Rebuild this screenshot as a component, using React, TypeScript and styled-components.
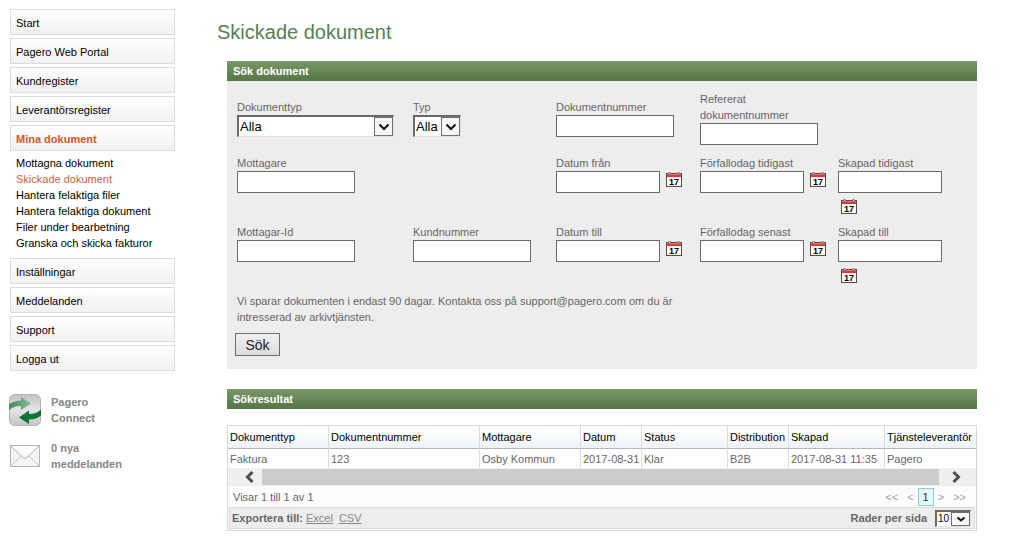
import React, { useId } from "react";
import styled, { createGlobalStyle, css } from "styled-components";

const GlobalStyle = createGlobalStyle`
  *, *::before, *::after { box-sizing: border-box; }
  body {
    margin: 0;
    background: #fff;
    color: #666;
    font-family: "Liberation Sans", Arial, sans-serif;
    font-size: 11px;
    line-height: 16px;
  }
  button, input, select { font-family: inherit; margin: 0; border-radius: 0; }
`;

const Page = styled.div`
  display: flex;
  align-items: flex-start;
  gap: 42px;
  padding: 9px 40px 18px 10px;
`;

const Sidebar = styled.aside`
  flex: 0 0 165px;
`;

const NavList = styled.ul`
  list-style: none;
  margin: 0;
  padding: 0;
  display: flex;
  flex-direction: column;
  gap: 3px;
`;

const NavLink = styled.a<{ $active?: boolean }>`
  display: block;
  height: 26px;
  padding: 5px;
  border: 1px solid #dcdcdc;
  background: linear-gradient(#fff, #f1f1f1);
  color: ${(p) => (p.$active ? "#d0592b" : "#000")};
  font-weight: ${(p) => (p.$active ? "bold" : "normal")};
  line-height: 16px;
  text-decoration: none;
`;

const SubList = styled.ul`
  list-style: none;
  margin: 0;
  padding: 4px 0 4px 6px;
`;

const SubLink = styled.a<{ $active?: boolean }>`
  display: block;
  color: ${(p) => (p.$active ? "#cc6248" : "#000")};
  text-decoration: none;
`;

const Shortcuts = styled.div`
  display: flex;
  flex-direction: column;
  gap: 14px;
  margin-top: 23px;
`;

const Shortcut = styled.a`
  display: grid;
  grid-template-columns: 32px 80px;
  align-items: center;
  gap: 10px;
  margin-left: -1px;
  color: #868686;
  font-weight: bold;
  text-decoration: none;
`;

const Main = styled.main`
  flex: 1;
  min-width: 0;
`;

const Title = styled.h1`
  margin: 11px 0 17px;
  color: #578054;
  font-size: 20px;
  line-height: 24px;
  font-weight: normal;
`;

const Panel = styled.section`
  margin: 0 0 20px 10px;
`;

const PanelTitle = styled.h2`
  margin: 0;
  padding: 2px 6px;
  background: linear-gradient(#7a9969, #567545);
  color: #fff;
  font-size: 11px;
  line-height: 16px;
  font-weight: bold;
`;

const SearchForm = styled.form`
  padding: 10px 15px 13px 10px;
  background: #ededed;
`;

const Fields = styled.div`
  display: grid;
  grid-template-columns: 176fr 143fr 144fr 138fr 124fr;
  row-gap: 10px;
`;

const Field = styled.div<{ $col: number; $row: number }>`
  grid-column: ${(p) => p.$col};
  grid-row: ${(p) => p.$row};
  align-self: ${(p) => (p.$row === 1 ? "center" : "start")};
  min-width: 0;
`;

const Label = styled.label`
  display: block;
  max-width: 118px;
`;

const Control = styled.div`
  display: flex;
  flex-wrap: wrap;
  align-items: flex-start;
  gap: 5px 3px;
`;

const TextInput = styled.input<{ $short?: boolean }>`
  width: ${(p) => (p.$short ? 104 : 118)}px;
  height: 22px;
  padding: 1px 3px;
  border: 1px solid #6a6a6a;
  background: #fff;
  font-size: 13px;
`;

const IconButton = styled.button`
  display: block;
  width: 16px;
  height: 15px;
  margin: 1px 0 0 3px;
  padding: 0;
  border: 0;
  background: none;
`;

const small = css`
  height: 17px;
  font-size: 10px;
`;

const SelectBox = styled.div<{ $width: number; $small?: boolean }>`
  position: relative;
  width: ${(p) => p.$width}px;
  height: ${(p) => (p.$small ? 17 : 22)}px;
`;

const Select = styled.select<{ $small?: boolean }>`
  appearance: none;
  display: block;
  width: 100%;
  height: 22px;
  padding: 0 1px;
  border: 1px solid #e3e3e3;
  border-top: 2px solid #696969;
  border-left: 2px solid #696969;
  background: #fff;
  color: #000;
  font-size: 13px;
  ${(p) => p.$small && small}
`;

const SelectArrow = styled.span`
  position: absolute;
  top: 2px;
  right: 1px;
  bottom: 1px;
  width: 19px;
  display: flex;
  align-items: center;
  justify-content: center;
  border: 1px solid #707070;
  background: #f6f6f6;
  pointer-events: none;
`;

const Note = styled.p`
  max-width: 460px;
  margin: 10px 0 8px;
`;

const SearchButton = styled.button`
  display: block;
  width: 45px;
  height: 23px;
  margin-left: -2px;
  padding: 0;
  border: 1px solid #6d6d6d;
  background: linear-gradient(#f1f1f1, #dcdcdc);
  color: #222;
  font-size: 14px;
`;

const Result = styled.div`
  margin-top: 16px;
  border: 1px solid #d8d8d8;
  background: #fcfcfc;
`;

const Table = styled.table`
  width: 100%;
  table-layout: fixed;
  border-collapse: separate;
  border-spacing: 0;
  white-space: nowrap;
`;

const HeadCell = styled.th`
  height: 23px;
  padding: 0 2px;
  border-right: 1px solid #dcdcdc;
  border-bottom: 1px solid #b4b7b9;
  background: linear-gradient(#fff 30%, #eef2f5);
  color: #000;
  font-weight: normal;
  text-align: left;
  &:last-child { border-right: 0; }
`;

const Cell = styled.td`
  height: 19px;
  padding: 0 2px;
  border-right: 1px solid #dcdcdc;
  background: #fff;
  &:last-child { border-right: 0; }
`;

const ScrollBar = styled.div`
  display: flex;
  align-items: stretch;
  height: 18px;
  padding: 1px 0;
  background: #efefef;
`;

const ScrollButton = styled.button<{ $side: "left" | "right" }>`
  display: flex;
  align-items: center;
  justify-content: flex-end;
  width: ${(p) => (p.$side === "left" ? 34 : 37)}px;
  padding: 0 ${(p) => (p.$side === "left" ? 8 : 14)}px 0 0;
  border: 0;
  background: none;
`;

const ScrollThumb = styled.div`
  flex: 1;
  background: #cdcdcd;
`;

const PagerRow = styled.div`
  display: flex;
  align-items: center;
  justify-content: space-between;
  height: 21px;
  padding: 0 10px 0 5px;
`;

const Pager = styled.nav`
  display: flex;
  align-items: center;
  gap: 4px;
`;

const PageButton = styled.button<{ $current?: boolean }>`
  height: 18px;
  padding: 0 ${(p) => (p.$current ? 4 : 0)}px;
  border: ${(p) => (p.$current ? "1px solid #8ccbe0" : "0")};
  background: ${(p) => (p.$current ? "#e2f7fe" : "none")};
  color: ${(p) => (p.$current ? "#333" : "#a0a0a0")};
  font-size: 11px;
  line-height: 16px;
  &:first-child { margin-right: 5px; }
  &:last-child { margin-left: 5px; }
`;

const Footer = styled.div`
  display: flex;
  align-items: center;
  justify-content: space-between;
  height: 22px;
  margin: 0 1px 1px;
  padding: 0 3px 0 2px;
  border: 1px solid #dadada;
  background: #ededed;
  font-weight: bold;
`;

const Exports = styled.div`
  display: flex;
  gap: 6px;
`;

const ExportLink = styled.a`
  color: #888;
  font-weight: normal;
`;

const PageSize = styled.div`
  display: flex;
  align-items: center;
  gap: 8px;
`;

const CalendarIcon = () => (
  <svg width="16" height="15" viewBox="0 0 16 15" aria-hidden="true">
    <rect x="0.5" y="1.5" width="15" height="13" fill="#fffdf6" stroke="#5c4a42" />
    <rect x="1" y="2" width="14" height="3" fill="#e5373b" />
    <path d="M1 2.5h14" stroke="#f4777a" />
    <rect x="2.5" y="0.5" width="2" height="2" rx="1" fill="#eee" stroke="#6b4b48" />
    <rect x="11.5" y="0.5" width="2" height="2" rx="1" fill="#eee" stroke="#6b4b48" />
    <text x="8" y="13" textAnchor="middle" fontFamily="Liberation Sans, sans-serif" fontWeight="bold" fontSize="9" fill="#000">17</text>
  </svg>
);

const ConnectIcon = () => (
  <svg width="32" height="32" viewBox="0 0 32 32" aria-hidden="true">
    <defs>
      <linearGradient id="tile" x1="0" y1="0" x2="0" y2="1">
        <stop offset="0" stopColor="#c2c2c2" />
        <stop offset="0.5" stopColor="#e4e4e4" />
        <stop offset="1" stopColor="#c4c4c4" />
      </linearGradient>
      <linearGradient id="pale" x1="0" y1="0" x2="1" y2="0">
        <stop offset="0" stopColor="#3f8a58" />
        <stop offset="1" stopColor="#8fbb9c" />
      </linearGradient>
    </defs>
    <rect x="0.5" y="0.5" width="31" height="31" rx="5" fill="url(#tile)" stroke="#b2b2b2" />
    <path d="M0 10.500C4 7.500 8 6.500 12 6.500V3l10 6.500L12 16v-4C8 11.500 4 12.500 0 16z" fill="url(#pale)" />
    <path d="M32 15.500c-3 3-7 4.500-12 4.500V16.500L10 23.500 20 30v-4.500c5 0 9-1.500 12-4z" fill="#0f7336" />
  </svg>
);

const MailIcon = () => (
  <svg width="32" height="24" viewBox="0 0 32 24" aria-hidden="true">
    <rect x="1.500" y="1.500" width="29" height="21" fill="#f4f4f4" stroke="#b5b5b5" />
    <path d="M2 22l10-10M30 22L20 12" fill="none" stroke="#c4c4c4" />
    <path d="M2 2l12 11.500q2 1.500 4 0L30 2" fill="#fbfbfb" stroke="#b0b0b0" />
  </svg>
);

const Chevron = ({ d }: { d: string }) => (
  <svg width="10" height="14" viewBox="0 0 10 14" aria-hidden="true">
    <path d={d} fill="none" stroke="#505050" strokeWidth="3" />
  </svg>
);

function DropDown({ id, value, width, small: isSmall }: { id: string; value: string; width: number; small?: boolean }) {
  return (
    <SelectBox $width={width} $small={isSmall}>
      <Select id={id} $small={isSmall}>
        <option>{value}</option>
      </Select>
      <SelectArrow>
        <svg width="12" height="8" viewBox="0 0 12 8" aria-hidden="true">
          <path
            d={isSmall ? "M2.500 2.500L6 5.500 9.500 2.500" : "M1.500 1.500L6 6 10.500 1.500"}
            fill="none"
            stroke="#111"
            strokeWidth="2"
          />
        </svg>
      </SelectArrow>
    </SelectBox>
  );
}

type FieldSpec = {
  label: string;
  col: number;
  row: number;
  select?: number;
  date?: boolean;
};

const fields: FieldSpec[] = [
  { label: "Dokumenttyp", col: 1, row: 1, select: 157 },
  { label: "Typ", col: 2, row: 1, select: 48 },
  { label: "Dokumentnummer", col: 3, row: 1 },
  { label: "Refererat dokumentnummer", col: 4, row: 1 },
  { label: "Mottagare", col: 1, row: 2 },
  { label: "Datum från", col: 3, row: 2, date: true },
  { label: "Förfallodag tidigast", col: 4, row: 2, date: true },
  { label: "Skapad tidigast", col: 5, row: 2, date: true },
  { label: "Mottagar-Id", col: 1, row: 3 },
  { label: "Kundnummer", col: 2, row: 3 },
  { label: "Datum till", col: 3, row: 3, date: true },
  { label: "Förfallodag senast", col: 4, row: 3, date: true },
  { label: "Skapad till", col: 5, row: 3, date: true },
];

function SearchField({ label, col, row, select, date }: FieldSpec) {
  const id = useId();
  return (
    <Field $col={col} $row={row}>
      <Label htmlFor={id}>{label}</Label>
      <Control>
        {select ? <DropDown id={id} value="Alla" width={select} /> : <TextInput id={id} type="text" $short={date} />}
        {date && (
          <IconButton type="button" aria-label={`Välj ${label}`}>
            <CalendarIcon />
          </IconButton>
        )}
      </Control>
    </Field>
  );
}

const subPages = [
  "Mottagna dokument",
  "Skickade dokument",
  "Hantera felaktiga filer",
  "Hantera felaktiga dokument",
  "Filer under bearbetning",
  "Granska och skicka fakturor",
];

const pages = [
  "Start",
  "Pagero Web Portal",
  "Kundregister",
  "Leverantörsregister",
  "Mina dokument",
  "Inställningar",
  "Meddelanden",
  "Support",
  "Logga ut",
];

const columns = [
  { name: "Dokumenttyp", share: 101, value: "Faktura" },
  { name: "Dokumentnummer", share: 151, value: "123" },
  { name: "Mottagare", share: 101, value: "Osby Kommun" },
  { name: "Datum", share: 61, value: "2017-08-31" },
  { name: "Status", share: 86, value: "Klar" },
  { name: "Distribution", share: 61, value: "B2B" },
  { name: "Skapad", share: 96, value: "2017-08-31 11:35" },
  { name: "Tjänsteleverantör", share: 91, value: "Pagero" },
];

const totalShare = columns.reduce((sum, c) => sum + c.share, 0);

export default function App() {
  return (
    <>
      <GlobalStyle />
      <Page>
        <Sidebar>
          <NavList>
            {pages.map((page) => (
              <li key={page}>
                <NavLink href="#" $active={page === "Mina dokument"}>{page}</NavLink>
                {page === "Mina dokument" && (
                  <SubList>
                    {subPages.map((sub) => (
                      <li key={sub}>
                        <SubLink href="#" $active={sub === "Skickade dokument"}>{sub}</SubLink>
                      </li>
                    ))}
                  </SubList>
                )}
              </li>
            ))}
          </NavList>
          <Shortcuts>
            <Shortcut href="#"><ConnectIcon />Pagero Connect</Shortcut>
            <Shortcut href="#"><MailIcon />0 nya meddelanden</Shortcut>
          </Shortcuts>
        </Sidebar>

        <Main>
          <Title>Skickade dokument</Title>

          <Panel>
            <PanelTitle>Sök dokument</PanelTitle>
            <SearchForm onSubmit={(e) => e.preventDefault()}>
              <Fields>
                {fields.map((f) => <SearchField key={f.label} {...f} />)}
              </Fields>
              <Note>
                Vi sparar dokumenten i endast 90 dagar. Kontakta oss på support@pagero.com om du är intresserad av
                arkivtjänsten.
              </Note>
              <SearchButton type="submit">Sök</SearchButton>
            </SearchForm>
          </Panel>

          <Panel>
            <PanelTitle>Sökresultat</PanelTitle>
            <Result>
              <Table>
                <colgroup>
                  {columns.map((c) => (
                    <col key={c.name} style={{ width: `${(c.share / totalShare) * 100}%` }} />
                  ))}
                </colgroup>
                <thead>
                  <tr>{columns.map((c) => <HeadCell key={c.name} scope="col">{c.name}</HeadCell>)}</tr>
                </thead>
                <tbody>
                  <tr>{columns.map((c) => <Cell key={c.name}>{c.value}</Cell>)}</tr>
                </tbody>
              </Table>
              <ScrollBar>
                <ScrollButton type="button" $side="left" aria-label="Rulla åt vänster">
                  <Chevron d="M8.500 2L3.500 7l5 5" />
                </ScrollButton>
                <ScrollThumb />
                <ScrollButton type="button" $side="right" aria-label="Rulla åt höger">
                  <Chevron d="M1.500 2l5 5-5 5" />
                </ScrollButton>
              </ScrollBar>
              <PagerRow>
                <span>Visar 1 till 1 av 1</span>
                <Pager aria-label="Sidor">
                  <PageButton type="button">&lt;&lt;</PageButton>
                  <PageButton type="button">&lt;</PageButton>
                  <PageButton type="button" $current>1</PageButton>
                  <PageButton type="button">&gt;</PageButton>
                  <PageButton type="button">&gt;&gt;</PageButton>
                </Pager>
              </PagerRow>
              <Footer>
                <Exports>
                  <span>Exportera till: <ExportLink href="#">Excel</ExportLink></span>
                  <ExportLink href="#">CSV</ExportLink>
                </Exports>
                <PageSize>
                  <label htmlFor="page-size">Rader per sida</label>
                  <DropDown id="page-size" value="10" width={36} small />
                </PageSize>
              </Footer>
            </Result>
          </Panel>
        </Main>
      </Page>
    </>
  );
}
